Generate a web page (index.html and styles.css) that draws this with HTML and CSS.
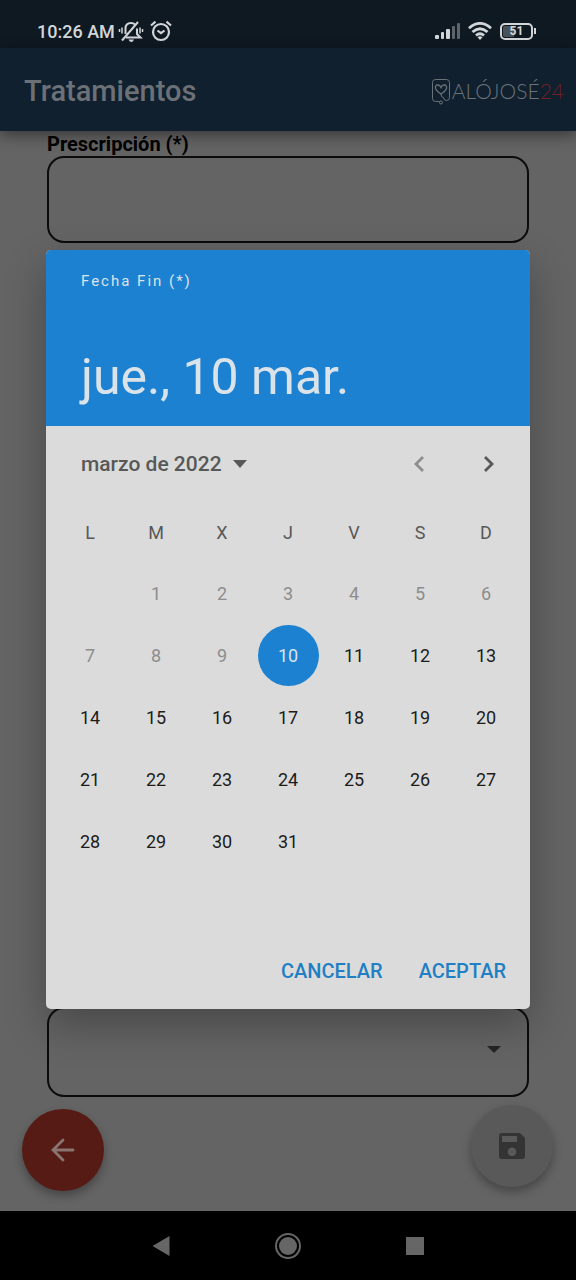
FILE: index.html
```html
<!DOCTYPE html>
<html lang="es">
<head>
<meta charset="utf-8">
<meta name="viewport" content="width=device-width, initial-scale=1">
<title>Tratamientos</title>
<link rel="stylesheet" href="styles.css">
</head>
<body>
<div class="screen">
  <div class="status">
    <div class="status-group">
      <span class="clock">10:26 AM</span>
      <svg class="bell" viewBox="0 0 26 24" width="26" height="24" aria-hidden="true">
        <g fill="none" stroke="currentColor" stroke-width="2">
          <path d="M8 18.500h14.500l-3.500-3.500V9.500M7.500 15V9.500c0-3.500 2-5.500 5.500-5.500 1.700 0 3 .5 4 1.500"/>
          <path d="M4 21.500L20 3"/>
          <path d="M4 8.500v6M1.500 10v3M22 8.500v6M24.500 10v3" stroke-width="1.500"/>
        </g>
        <path fill="currentColor" d="M10.500 20.500h5.500q-1 2.500-2.700 2.500t-2.800-2.500z"/>
      </svg>
      <svg class="alarm" viewBox="0 0 24 24" width="24" height="24" aria-hidden="true">
        <g fill="none" stroke="currentColor" stroke-width="2.200">
          <circle cx="12" cy="13" r="8"/>
          <path d="M2 6.500L6.500 2.700M22 6.500l-4.500-3.800M8.500 11.500l3.500 2.700 3.500-2.700"/>
        </g>
      </svg>
    </div>
    <div class="status-group status-right">
      <svg viewBox="0 0 26 18" width="26" height="18" aria-hidden="true">
        <g fill="currentColor">
          <rect x="0" y="13" width="4" height="4" rx="1"/>
          <rect x="6" y="10" width="3" height="7" rx="1"/>
          <rect x="11" y="7" width="4" height="10" rx="1"/>
          <rect x="17" y="4" width="3" height="13" rx="1" opacity=".4"/>
          <rect x="22" y="1" width="3" height="16" rx="1" opacity=".4"/>
        </g>
      </svg>
      <svg viewBox="0 0 24 18" width="24" height="18" aria-hidden="true">
        <g fill="none" stroke="currentColor" stroke-width="2.800">
          <path d="M1 6.200Q12-3.400 23 6.200M4.500 10Q12 3.400 19.500 10M8 13.500q4-3.500 8 0"/>
        </g>
        <path fill="currentColor" d="M9.500 15.200q2.500-1.800 5 0L12 18z"/>
      </svg>
      <span class="battery"><span class="battery-cell">51</span></span>
    </div>
  </div>

  <header class="appbar">
    <h1 class="appbar-title">Tratamientos</h1>
    <div class="logo">
      <svg viewBox="0 0 18 28" width="18" height="28" aria-hidden="true">
        <g fill="none" stroke="currentColor" stroke-width="1">
          <path d="M7.500 24.500h-4a3 3 0 0 1-3-3v-16a3 3 0 0 1 3-3h11a3 3 0 0 1 3 3v15a3 3 0 0 1-3 3 3 3 0 0 1-3-3"/>
          <path stroke-width="1.300" d="M6 8H4.500Q3 9 3.500 11.500 5 15 9 17q4-2 5.500-5.500Q15 9 13.500 8H12M6 8q2 0 3 2.500Q10 8 12 8"/>
          <path d="M9 17q0 3.500 2.500 3.500"/>
          <circle cx="9" cy="25.500" r="1.500"/>
        </g>
      </svg>
      <span class="logo-text">ALÓJOSÉ<span class="logo-num">24</span></span>
    </div>
  </header>

  <main class="content">
    <form class="form">
      <div class="field">
        <label class="field-label" for="prescripcion">Prescripción (*)</label>
        <textarea class="box" id="prescripcion"></textarea>
      </div>
      <div class="select-wrap">
        <select class="box box-select" aria-label="Opciones"><option></option></select>
      </div>
    </form>
    <div class="fabs">
      <button class="fab fab-back" type="button" aria-label="Volver">
        <svg viewBox="0 0 24 24" width="24" height="24" aria-hidden="true"><path fill="none" stroke="currentColor" stroke-width="2.800" stroke-linecap="round" d="M22 12H2M12 2L2 12l10 10"/></svg>
      </button>
      <button class="fab fab-save" type="button" aria-label="Guardar">
        <svg viewBox="0 0 26 26" width="26" height="26" aria-hidden="true"><path fill="currentColor" fill-rule="evenodd" d="M3 0h18l5 5v18a3 3 0 0 1-3 3H3a3 3 0 0 1-3-3V3a3 3 0 0 1 3-3zM3 3v6h15V3zM13 14.500a4.300 4.300 0 1 0 .01 0z"/></svg>
      </button>
    </div>
  </main>

  <nav class="sysnav">
    <button class="sysnav-btn" type="button" aria-label="Atrás"><svg viewBox="0 0 18 20" width="18" height="20"><path fill="currentColor" d="M17.500 0v20L.5 10z"/></svg></button>
    <button class="sysnav-btn" type="button" aria-label="Inicio"><svg viewBox="0 0 26 26" width="26" height="26"><circle cx="13" cy="13" r="12" fill="none" stroke="currentColor" stroke-width="2"/><circle cx="13" cy="13" r="9" fill="currentColor"/></svg></button>
    <button class="sysnav-btn" type="button" aria-label="Recientes"><svg viewBox="0 0 18 18" width="18" height="18"><path fill="currentColor" d="M0 0h18v18H0z"/></svg></button>
  </nav>

  <div class="overlay">
    <section class="dialog" role="dialog" aria-labelledby="dialog-label">
      <header class="dialog-head">
        <span class="dialog-label" id="dialog-label">Fecha Fin (*)</span>
        <h2 class="dialog-date">jue., 10 mar.</h2>
      </header>
      <div class="month-row">
        <button class="month" type="button">marzo de 2022
          <svg viewBox="0 0 14 8" width="14" height="8" aria-hidden="true"><path fill="currentColor" d="M0 0h14L7 8z"/></svg>
        </button>
        <div class="month-nav">
          <button class="arrow" type="button" aria-label="Mes anterior" disabled><svg viewBox="0 0 12 18" width="12" height="18"><path fill="none" stroke="currentColor" stroke-width="2.800" d="M10 2L3 9l7 7"/></svg></button>
          <button class="arrow" type="button" aria-label="Mes siguiente"><svg viewBox="0 0 12 18" width="12" height="18"><path fill="none" stroke="currentColor" stroke-width="2.800" d="M2 2l7 7-7 7"/></svg></button>
        </div>
      </div>
      <table class="calendar">
        <thead><tr><th>L</th><th>M</th><th>X</th><th>J</th><th>V</th><th>S</th><th>D</th></tr></thead>
        <tbody>
          <tr><td></td><td><button class="day" disabled>1</button></td><td><button class="day" disabled>2</button></td><td><button class="day" disabled>3</button></td><td><button class="day" disabled>4</button></td><td><button class="day" disabled>5</button></td><td><button class="day" disabled>6</button></td></tr>
          <tr><td><button class="day" disabled>7</button></td><td><button class="day" disabled>8</button></td><td><button class="day" disabled>9</button></td><td><button class="day day-selected">10</button></td><td><button class="day">11</button></td><td><button class="day">12</button></td><td><button class="day">13</button></td></tr>
          <tr><td><button class="day">14</button></td><td><button class="day">15</button></td><td><button class="day">16</button></td><td><button class="day">17</button></td><td><button class="day">18</button></td><td><button class="day">19</button></td><td><button class="day">20</button></td></tr>
          <tr><td><button class="day">21</button></td><td><button class="day">22</button></td><td><button class="day">23</button></td><td><button class="day">24</button></td><td><button class="day">25</button></td><td><button class="day">26</button></td><td><button class="day">27</button></td></tr>
          <tr><td><button class="day">28</button></td><td><button class="day">29</button></td><td><button class="day">30</button></td><td><button class="day">31</button></td><td></td><td></td><td></td></tr>
        </tbody>
      </table>
      <div class="actions">
        <button class="action" type="button">CANCELAR</button>
        <button class="action" type="button">ACEPTAR</button>
      </div>
    </section>
  </div>
</div>
</body>
</html>
```
FILE: styles.css
```css
* { box-sizing: border-box; }

body {
  margin: 0;
  background: #646464;
  font-family: Roboto, "Liberation Sans", sans-serif;
}

button {
  margin: 0;
  padding: 0;
  border: 0;
  background: none;
  font: inherit;
  color: inherit;
}

svg { display: block; }

.screen {
  position: relative;
  display: flex;
  flex-direction: column;
  min-height: 100vh;
}

/* System status bar */
.status {
  display: flex;
  justify-content: space-between;
  height: 48px;
  padding: 15px 40px 0 37px;
  background: #0f1922;
  color: #d3d6d8;
}

.status-group {
  display: flex;
  align-items: center;
  height: 32px;
}

.clock {
  font-size: 18px;
  font-weight: 500;
}

.bell { margin: 0 5px 0 3px; }

.status-right { gap: 7px; }

.battery {
  display: flex;
  align-items: center;
  gap: 1px;
  margin-left: 1px;
}

.battery::after {
  content: "";
  width: 2px;
  height: 6px;
  background: currentColor;
}

.battery-cell {
  width: 33px;
  height: 17px;
  border: 2px solid currentColor;
  border-radius: 5px;
  background: linear-gradient(90deg, #4a5259 40%, transparent 40%) content-box;
  padding: 1px;
  font-size: 12px;
  font-weight: 700;
  line-height: 11px;
  text-align: center;
}

/* App bar */
.appbar {
  z-index: 1;
  display: flex;
  align-items: center;
  justify-content: space-between;
  height: 83px;
  padding: 2px 12px 0 24px;
  background: #10202e;
  box-shadow: 0 4px 14px rgba(0, 0, 0, .45);
}

.appbar-title {
  margin: 0;
  font-size: 29px;
  font-weight: 500;
  color: #6b7176;
}

.logo {
  display: flex;
  align-items: center;
  gap: 2px;
  color: #6b737a;
}

.logo-text {
  font-family: Lato, Roboto, sans-serif;
  font-size: 21px;
  font-weight: 300;
}

.logo-num { color: #6e2022; }

/* Form behind the dialog */
.content {
  flex: 1;
  display: flex;
  flex-direction: column;
}

.form {
  flex: 1;
  display: flex;
  flex-direction: column;
  justify-content: space-between;
  padding: 1px 47px 8px;
}

.field-label {
  display: block;
  font-size: 20px;
  font-weight: 700;
  line-height: 24px;
}

.box {
  display: block;
  width: 100%;
  height: 87px;
  border: 2px solid #0c0c0c;
  border-radius: 17px;
  background: transparent;
  resize: none;
}

.box-select {
  appearance: none;
  height: 90px;
}

.select-wrap { position: relative; }

.select-wrap::after {
  content: "";
  position: absolute;
  right: 28px;
  bottom: 44px;
  border: 7px solid transparent;
  border-top-color: #252525;
  border-bottom: 0;
}

.fabs {
  display: flex;
  justify-content: space-between;
  height: 106px;
  padding: 0 23px 20px 22px;
}

.fab {
  display: flex;
  align-items: center;
  justify-content: center;
  width: 82px;
  height: 82px;
  border-radius: 50%;
  box-shadow: 0 5px 10px rgba(0, 0, 0, .3);
}

.fab-back {
  align-self: flex-end;
  background: #561b14;
  color: #8a7472;
}

.fab-save {
  background: #595959;
  color: #343434;
}

/* System navigation */
.sysnav {
  display: grid;
  grid-template-columns: repeat(3, 1fr);
  height: 69px;
  padding: 0 98px;
  background: #000;
  color: #666;
}

.sysnav-btn {
  display: flex;
  align-items: center;
  justify-content: center;
}

/* Date picker */
.overlay {
  position: absolute;
  inset: 48px 0 69px;
  z-index: 2;
  display: flex;
  align-items: center;
  padding: 0 46px;
}

.dialog {
  width: 100%;
  border-radius: 5px;
  background: #dbdbdb;
  box-shadow: 0 16px 40px rgba(0, 0, 0, .28);
}

.dialog-head {
  display: flex;
  flex-direction: column;
  justify-content: space-between;
  height: 176px;
  padding: 21px 36px 19px 35px;
  border-radius: 5px 5px 0 0;
  background: #1d81d2;
  color: #dbe3ea;
}

.dialog-label {
  font-size: 15px;
  line-height: 20px;
  letter-spacing: 2px;
}

.dialog-date {
  margin: 0;
  font-size: 50px;
  font-weight: 400;
  line-height: 60px;
}

.month-row {
  display: flex;
  align-items: center;
  justify-content: space-between;
  height: 76px;
  padding: 0 6px 0 35px;
  color: #585858;
}

.month {
  display: flex;
  align-items: center;
  gap: 11px;
  font-size: 21px;
  font-weight: 500;
}

.month-nav { display: flex; }

.arrow {
  display: flex;
  align-items: center;
  justify-content: center;
  width: 70px;
  height: 70px;
}

.arrow:disabled { color: #8d8d8d; }

.calendar {
  width: calc(100% - 22px);
  height: 370px;
  margin: 0 11px;
  border-collapse: collapse;
  table-layout: fixed;
  font-size: 18px;
  color: #1c1c1c;
}

.calendar th,
.calendar td {
  padding: 0;
}

.calendar th {
  height: 61px;
  font-weight: 400;
  color: #585858;
}

.day {
  display: block;
  width: 61px;
  height: 61px;
  margin: 0 auto;
  border-radius: 50%;
}

.day:disabled { color: #8d8d8d; }

.day-selected {
  background: #1d81d2;
  color: #dbe3ea;
}

.actions {
  display: flex;
  align-items: center;
  justify-content: flex-end;
  gap: 36px;
  height: 76px;
  margin-top: 61px;
  padding: 0 24px;
  font-size: 20px;
  font-weight: 500;
  color: #217fc4;
}
```
